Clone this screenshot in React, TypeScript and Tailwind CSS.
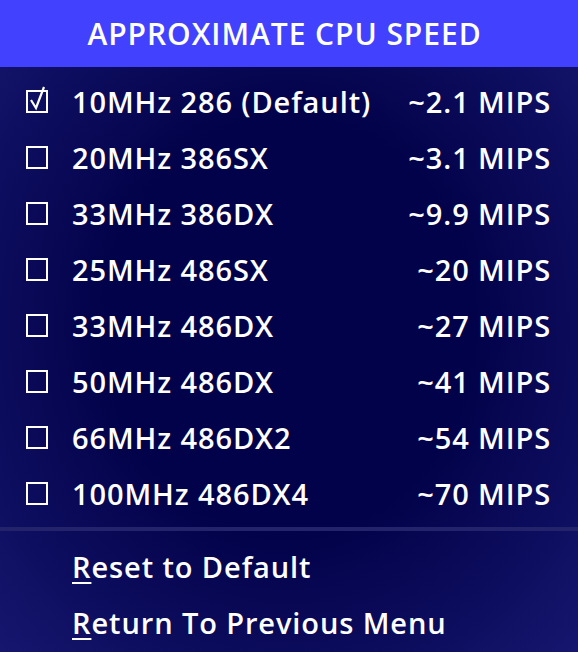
import React from "react";

const speeds = [
  { label: "10MHz 286 (Default)", mips: "~2.1 MIPS", checked: true },
  { label: "20MHz 386SX", mips: "~3.1 MIPS" },
  { label: "33MHz 386DX", mips: "~9.9 MIPS" },
  { label: "25MHz 486SX", mips: "~20 MIPS" },
  { label: "33MHz 486DX", mips: "~27 MIPS" },
  { label: "50MHz 486DX", mips: "~41 MIPS" },
  { label: "66MHz 486DX2", mips: "~54 MIPS" },
  { label: "100MHz 486DX4", mips: "~70 MIPS" },
];

const Box = ({ checked }: { checked?: boolean }) => (
  <svg width="24" height="28" viewBox="0 0 24 28" fill="none" stroke="white" strokeWidth="2">
    <rect x="2" y="5" width="20" height="21" />
    {checked && <path d="M6 14 L11 22 L19 1" strokeWidth="2.2" strokeLinejoin="miter" />}
  </svg>
);

export default function App() {
  return (
    <div className="w-[578px] h-[652px] overflow-hidden flex flex-col text-white font-['Open_Sans',sans-serif] font-semibold bg-[radial-gradient(ellipse_at_center,#02024a_45%,#16166f_100%)]">
      {/* Title */}
      <div className="h-[67px] flex items-center justify-center pr-[9px] bg-[#4141fe] text-[30px] tracking-[0.95px]">
        APPROXIMATE CPU SPEED
      </div>

      {/* Options */}
      <div className="pt-[7px] flex flex-col">
        {speeds.map((s) => (
          <div key={s.label} className="h-[56px] flex items-center pl-[25px] pr-[28px] text-[29px] tracking-[0.9px]">
            <span className="w-[47px] flex items-center -mt-[5px]">
              <Box checked={s.checked} />
            </span>
            <span className="flex-1">{s.label}</span>
            <span className="-mr-[1px]">{s.mips}</span>
          </div>
        ))}
      </div>

      <div className="mt-[5px] h-[4px] bg-[#23236c]" />

      {/* Actions */}
      <div className="pt-[8px] flex flex-col pl-[72px] text-[29px] tracking-[0.9px]">
        <div className="h-[56px] flex items-center">
          <span><span className="underline underline-offset-[4px] decoration-2">R</span>eset to Default</span>
        </div>
        <div className="h-[56px] flex items-center">
          <span><span className="underline underline-offset-[4px] decoration-2">R</span>eturn To Previous Menu</span>
        </div>
      </div>
    </div>
  );
}
